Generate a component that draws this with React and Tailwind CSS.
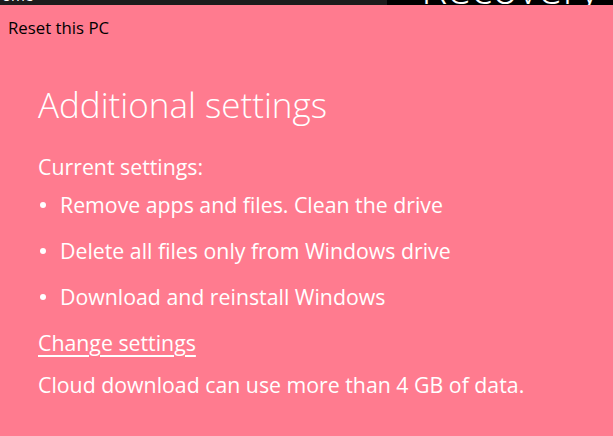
import React from "react";

const items = [
  "Remove apps and files. Clean the drive",
  "Delete all files only from Windows drive",
  "Download and reinstall Windows",
];

const App = () => {
  return (
    <div
      className="flex h-[436px] w-[613px] flex-col overflow-hidden bg-[#ff7b8f]"
      style={{ fontFamily: '"Open Sans", "Noto Sans", sans-serif' }}
    >
      {/* clipped window behind */}
      <div className="flex h-[5px] shrink-0 overflow-hidden">
        <div className="w-[387px] overflow-hidden bg-[#1c1c1c]">
          <div className="-mt-[12px] pl-[2px] text-[15px] leading-[15px] text-white">ome</div>
        </div>
        <div className="flex-1 overflow-hidden bg-black">
          <div className="-mt-[34px] pl-[34px] text-[44px] font-light leading-[42px] text-white">
            Recovery
          </div>
        </div>
      </div>

      <div className="px-[8px] pt-[13px] text-[16.8px] leading-[20px] text-black">Reset this PC</div>

      <div className="flex flex-col pl-[38px] pt-[47px] text-white">
        <h1 className="text-[35px] font-light leading-[40px]">Additional settings</h1>
        <p className="mt-[30px] text-[21.3px] leading-[24px]">Current settings:</p>
        <ul className="mt-[14px] flex flex-col gap-[22px]">
          {items.map((t) => (
            <li key={t} className="flex items-center text-[21.3px] leading-[24px]">
              <span className="flex w-[22px] items-center pl-[2px]">
                <span className="h-[6px] w-[6px] rounded-full bg-white" />
              </span>
              <span>{t}</span>
            </li>
          ))}
        </ul>
        <a className="mt-[22px] self-start text-[21.3px] leading-[24px] underline underline-offset-[4px]">
          Change settings
        </a>
        <p className="mt-[18px] text-[21.3px] leading-[24px]">Cloud download can use more than 4 GB of data.</p>
      </div>
    </div>
  );
};

export default App;
